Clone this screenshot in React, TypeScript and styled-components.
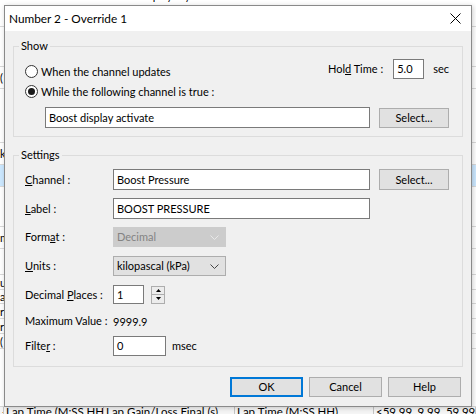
import React from 'react'
import styled, { createGlobalStyle } from 'styled-components'

const GlobalStyle = createGlobalStyle`
  html, body { margin: 0; padding: 0; background: #fff; }
  body {
    font-family: Lato, "Noto Sans", "Liberation Sans", sans-serif;
    font-size: 11px;
    color: #000;
  }
  * { box-sizing: border-box; }
`

/* ---------- the app window behind the dialog ---------- */

const Desktop = styled.div`
  position: relative;
  width: 476px;
  height: 414px;
  overflow: hidden;
  background: #fff;
`
const Sheet = styled.div`
  display: flex;
  flex-direction: column;
  height: 100%;
`
const SheetTop = styled.div`
  height: 5px;
  overflow: hidden;
  padding-left: 137px;
  line-height: 16px;
  white-space: nowrap;
  & > span { display: block; margin-top: -12px; }
`
const SheetRow = styled.div<{ $h?: number; $sel?: boolean }>`
  display: flex;
  ${p => (p.$h ? `height: ${p.$h}px;` : 'flex: 1;')}
  border-bottom: 1px solid #d9d9d9;
  line-height: ${p => (p.$h ? Math.min(p.$h, 16) : 16)}px;
  white-space: nowrap;
  overflow: hidden;
  align-items: center;
  background: ${p => (p.$sel ? '#cce8ff' : 'transparent')};
`
const SheetFoot = styled.div`
  display: flex;
  height: 7px;
  line-height: 16px;
  white-space: nowrap;
  overflow: hidden;
  background: #f5f5f5;
`
const FootCell = styled.div<{ $w?: number }>`
  ${p => (p.$w ? `width: ${p.$w}px;` : 'flex: 1;')}
  flex-shrink: 0;
  margin-top: -3px;
  padding-left: 2px;
  border-right: 1px solid #c4c4c4;
  overflow: hidden;
  font-size: 11.5px;
`

/* ---------- dialog ---------- */

const Window = styled.div`
  position: absolute;
  left: 4px;
  top: 5px;
  width: 468px;
  height: 402px;
  border: 1px solid #8a8a8a;
  background: #f0f0f0;
  display: flex;
  flex-direction: column;
  box-shadow: 1px 1px 5px rgba(0, 0, 0, 0.2);
`
const TitleBar = styled.div`
  height: 25px;
  flex-shrink: 0;
  background: #fff;
  display: flex;
  align-items: center;
  justify-content: space-between;
  padding: 0 10px 0 4px;
`
const Title = styled.span`
  font-size: 11.8px;
  line-height: 16px;
`
const Body = styled.div`
  flex: 1;
  display: flex;
  flex-direction: column;
  padding: 15px 8px 0 8px;
  white-space: nowrap;
`
const GroupBox = styled.div<{ $h: number; $mt?: number }>`
  position: relative;
  height: ${p => p.$h}px;
  margin-top: ${p => p.$mt ?? 0}px;
  border: 1px solid #dcdcdc;
  display: flex;
  flex-direction: column;
`
const Legend = styled.span`
  position: absolute;
  top: -9px;
  left: 5px;
  padding: 0 2px;
  line-height: 16px;
  background: #f0f0f0;
`
const ShowContent = styled.div`
  display: flex;
  flex-direction: column;
  padding: 12px 13px 0 11px;
`
const TopLine = styled.div`
  display: flex;
  align-items: flex-start;
  height: 20px;
`
const RadioOption = styled.label<{ $mt: number }>`
  display: flex;
  align-items: center;
  gap: 3px;
  height: 13px;
  margin-top: ${p => p.$mt}px;
  line-height: 16px;
`
const RadioDot = styled.span<{ $on?: boolean }>`
  width: 13px;
  height: 13px;
  border-radius: 50%;
  border: 1px solid #333;
  background: #fff;
  display: flex;
  align-items: center;
  justify-content: center;
  flex-shrink: 0;
  &::after {
    content: '';
    width: 7px;
    height: 7px;
    border-radius: 50%;
    background: ${p => (p.$on ? '#1a1a1a' : 'transparent')};
  }
`
const Spacer = styled.div`
  flex: 1;
`
const InlineLabel = styled.span<{ $mr?: number; $ml?: number }>`
  align-self: center;
  line-height: 16px;
  margin-right: ${p => p.$mr ?? 0}px;
  margin-left: ${p => p.$ml ?? 0}px;
`
const Field = styled.div<{ $w: number; $h?: number }>`
  width: ${p => p.$w}px;
  height: ${p => p.$h ?? 20}px;
  flex-shrink: 0;
  border: 1px solid #7a7a7a;
  background: #fff;
  padding-left: 3px;
  display: flex;
  align-items: center;
  line-height: 16px;
  overflow: hidden;
`
const ChannelLine = styled.div`
  display: flex;
  align-items: center;
  gap: 9px;
  margin-top: 9px;
  padding-left: 20px;
`
const Button = styled.button<{ $w: number; $h?: number; $default?: boolean }>`
  width: ${p => p.$w}px;
  height: ${p => p.$h ?? 20}px;
  flex-shrink: 0;
  padding: 0;
  font: inherit;
  line-height: 16px;
  color: #000;
  background: #e1e1e1;
  border: ${p => (p.$default ? '2px solid #0078d7' : '1px solid #adadad')};
`
const SettingsContent = styled.div`
  display: flex;
  flex-direction: column;
  padding-left: 11px;
`
const FormRow = styled.div<{ $mt: number; $h: number }>`
  display: flex;
  align-items: center;
  height: ${p => p.$h}px;
  margin-top: ${p => p.$mt}px;
`
const FieldLabel = styled.span`
  width: 88px;
  flex-shrink: 0;
  line-height: 16px;
`
const Key = styled.span`
  text-decoration: underline;
`
const Combo = styled.div<{ $disabled?: boolean }>`
  width: 113px;
  height: 20px;
  display: flex;
  align-items: center;
  justify-content: space-between;
  padding: 0 6px 0 3px;
  line-height: 16px;
  border: 1px solid ${p => (p.$disabled ? '#cccccc' : '#adadad')};
  background: ${p => (p.$disabled ? '#cccccc' : '#e1e1e1')};
  color: ${p => (p.$disabled ? '#838383' : '#000')};
`
const Spin = styled.div`
  display: flex;
  flex-direction: column;
  width: 14px;
  height: 18px;
  margin-left: 7px;
`
const SpinButton = styled.div`
  flex: 1;
  display: flex;
  align-items: center;
  justify-content: center;
  border: 1px solid #adadad;
  background: #ececec;
  & + & { margin-top: -1px; }
`
const ButtonBar = styled.div`
  display: flex;
  justify-content: flex-end;
  gap: 6px;
  margin-top: 10px;
  padding-right: 2px;
`

const Chevron = ({ color }: { color: string }) => (
  <svg width="9" height="5" viewBox="0 0 9 5">
    <polyline points="0.5,0.5 4.5,4.5 8.5,0.5" fill="none" stroke={color} strokeWidth="1" />
  </svg>
)

const Arrow = ({ up }: { up?: boolean }) => (
  <svg width="5" height="3" viewBox="0 0 5 3">
    <polygon points={up ? '0,3 5,3 2.5,0' : '0,0 5,0 2.5,3'} fill="#000" />
  </svg>
)

const CloseIcon = () => (
  <svg width="11" height="11" viewBox="0 0 11 11">
    <path d="M0.5 0.5 L10.5 10.5 M10.5 0.5 L0.5 10.5" stroke="#000" strokeWidth="1" />
  </svg>
)

const sheetRows = [
  { h: 22, t: '' },
  { h: 40, t: '' },
  { h: 22, t: '(' },
  { h: 54, t: '' },
  { h: 22, t: 'k' },
  { h: 22, t: '', sel: true },
  { h: 40, t: '' },
  { h: 22, t: 'm' },
  { h: 26, t: '' },
  { h: 15, t: 'u' },
  { h: 14, t: 'a' },
  { h: 15, t: 'r' },
  { h: 15, t: 'r' },
  { h: 15, t: '(' },
]

export default function App() {
  return (
    <Desktop>
      <GlobalStyle />
      <Sheet>
        <SheetTop>
          <span>Display Style</span>
        </SheetTop>
        {sheetRows.map((r, i) => (
          <SheetRow key={i} $h={r.h} $sel={r.sel}>
            {r.t}
          </SheetRow>
        ))}
        <SheetRow />
        <SheetFoot>
          <FootCell $w={4}>-</FootCell>
          <FootCell $w={100}>Lap Time (M:SS.HH)</FootCell>
          <FootCell $w={131}>Lap Gain/Loss Final (s)</FootCell>
          <FootCell $w={139}>Lap Time (M:SS.HH)</FootCell>
          <FootCell>&lt;59.99, 9.99, 59.99&gt;</FootCell>
        </SheetFoot>
      </Sheet>

      <Window>
        <TitleBar>
          <Title>Number 2 - Override 1</Title>
          <CloseIcon />
        </TitleBar>
        <Body>
          <GroupBox $h={91}>
            <Legend>Show</Legend>
            <ShowContent>
              <TopLine>
                <RadioOption $mt={6}>
                  <RadioDot />
                  When the channel updates
                </RadioOption>
                <Spacer />
                <InlineLabel $mr={10}>
                  Hol<Key>d</Key> Time :
                </InlineLabel>
                <Field $w={31}>5.0</Field>
                <InlineLabel $ml={9}>sec</InlineLabel>
              </TopLine>
              <RadioOption $mt={6}>
                <RadioDot $on />
                While the following channel is true :
              </RadioOption>
              <ChannelLine>
                <Field $w={325} $h={21}>Boost display activate</Field>
                <Button $w={70}>Select...</Button>
              </ChannelLine>
            </ShowContent>
          </GroupBox>

          <GroupBox $h={212} $mt={18}>
            <Legend>Settings</Legend>
            <SettingsContent>
              <FormRow $mt={13} $h={21}>
                <FieldLabel>
                  <Key>C</Key>hannel :
                </FieldLabel>
                <Field $w={257} $h={21}>Boost Pressure</Field>
                <Button $w={70} $h={21} style={{ marginLeft: 9 }}>
                  Select...
                </Button>
              </FormRow>
              <FormRow $mt={8} $h={21}>
                <FieldLabel>
                  <Key>L</Key>abel :
                </FieldLabel>
                <Field $w={257} $h={21}>BOOST PRESSURE</Field>
              </FormRow>
              <FormRow $mt={8} $h={20}>
                <FieldLabel>
                  Form<Key>a</Key>t :
                </FieldLabel>
                <Combo $disabled>
                  Decimal
                  <Chevron color="#e8e8e8" />
                </Combo>
              </FormRow>
              <FormRow $mt={9} $h={20}>
                <FieldLabel>
                  <Key>U</Key>nits :
                </FieldLabel>
                <Combo>
                  kilopascal (kPa)
                  <Chevron color="#444" />
                </Combo>
              </FormRow>
              <FormRow $mt={9} $h={19}>
                <FieldLabel>
                  Decimal <Key>P</Key>laces :
                </FieldLabel>
                <Field $w={31} $h={19}>1</Field>
                <Spin>
                  <SpinButton>
                    <Arrow up />
                  </SpinButton>
                  <SpinButton>
                    <Arrow />
                  </SpinButton>
                </Spin>
              </FormRow>
              <FormRow $mt={10} $h={14}>
                <FieldLabel>Maximum Value :</FieldLabel>
                <span>9999.9</span>
              </FormRow>
              <FormRow $mt={8} $h={20}>
                <FieldLabel>
                  Filte<Key>r</Key> :
                </FieldLabel>
                <Field $w={53}>0</Field>
                <InlineLabel $ml={6}>msec</InlineLabel>
              </FormRow>
            </SettingsContent>
          </GroupBox>

          <ButtonBar>
            <Button $w={73} $default>
              OK
            </Button>
            <Button $w={73}>Cancel</Button>
            <Button $w={73}>Help</Button>
          </ButtonBar>
        </Body>
      </Window>
    </Desktop>
  )
}
